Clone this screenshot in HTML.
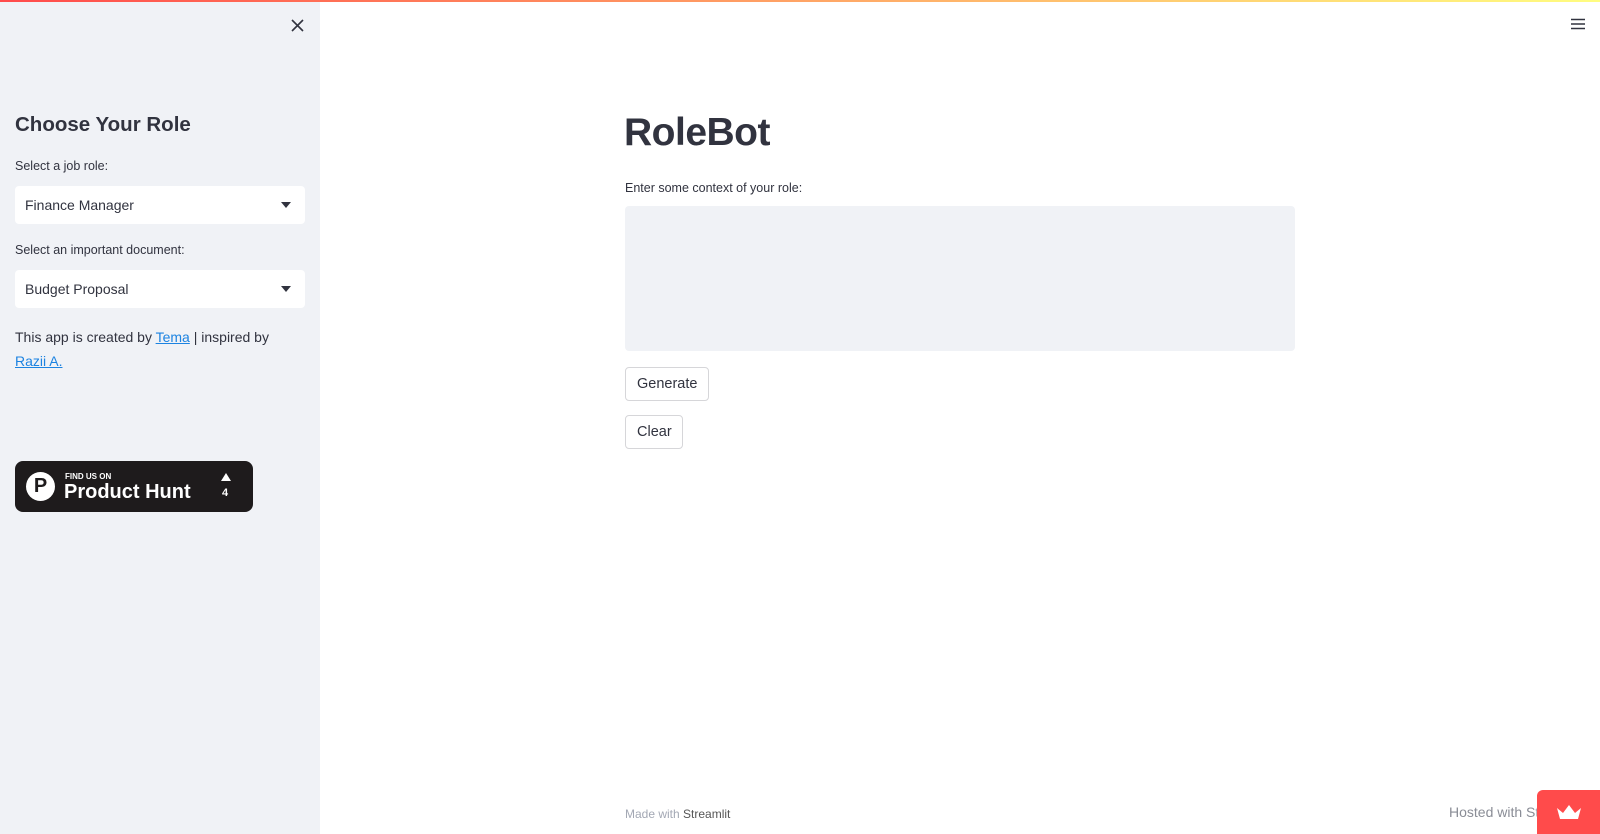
<!DOCTYPE html>
<html><head><meta charset="utf-8"><style>
*{box-sizing:border-box;margin:0;padding:0}
body{width:1600px;height:834px;overflow:hidden;font-family:"Liberation Sans",sans-serif;color:#31333F;background:#fff;position:relative}
.top{position:absolute;left:0;top:0;width:1600px;height:2px;background:linear-gradient(90deg,#ff4b4b,#fffd80);z-index:5}
.side{position:absolute;left:0;top:0;width:320px;height:834px;background:#f0f2f6}
.abs{position:absolute}
.sel{position:absolute;left:15px;width:290px;height:38px;background:#fff;border-radius:4px;font-size:14px;padding:11px 10px;}
.sel:after{content:"";position:absolute;right:14px;top:16px;border-left:5px solid transparent;border-right:5px solid transparent;border-top:6px solid #31333F}
.lbl{font-size:12.5px}
a{color:#1c83e1}
.btn{position:absolute;left:625px;height:34px;border:1px solid #d6d6d9;border-radius:4px;font-size:14.5px;padding:8px 11px;background:#fff}
</style></head><body>
<div class="top"></div>
<div class="side">
<svg class="abs" style="left:291px;top:19px" width="13" height="13" viewBox="0 0 13 13"><path d="M1 1L12 12M12 1L1 12" stroke="#31333F" stroke-width="1.6"/></svg>
<div class="abs" style="left:15px;top:113px;font-size:20.5px;font-weight:bold;color:#31333F">Choose Your Role</div>
<div class="abs lbl" style="left:15px;top:159px">Select a job role:</div>
<div class="sel" style="top:186px">Finance Manager</div>
<div class="abs lbl" style="left:15px;top:243px">Select an important document:</div>
<div class="sel" style="top:270px">Budget Proposal</div>
<div class="abs" style="left:15px;top:325px;font-size:14px;line-height:24px">This app is created by <a href="#">Tema</a> | inspired by<br><a href="#">Razii A.</a></div>
<div class="abs" style="left:15px;top:461px;width:238px;height:51px;background:#1e1b1c;border-radius:8px;color:#fff">
<div class="abs" style="left:11px;top:11px;width:29px;height:29px;border-radius:50%;background:#fff;color:#1e1b1c;font-weight:bold;font-size:20px;text-align:center;line-height:29px">P</div>
<div class="abs" style="left:50px;top:11px;font-size:8px;font-weight:bold">FIND US ON</div>
<div class="abs" style="left:49px;top:20px;font-size:20px;font-weight:bold">Product Hunt</div>
<div class="abs" style="left:206px;top:12px;border-left:5px solid transparent;border-right:5px solid transparent;border-bottom:8px solid #fff"></div>
<div class="abs" style="left:207px;top:26px;font-size:11px;font-weight:bold">4</div>
</div>
</div>
<svg class="abs" style="left:1570px;top:18px" width="16" height="12" viewBox="0 0 16 12"><path d="M1 1.5H15M1 6H15M1 10.5H15" stroke="#31333F" stroke-width="1.6"/></svg>
<div class="abs" style="left:624px;top:111px;font-size:39px;font-weight:bold;color:#31333F;letter-spacing:-0.5px">RoleBot</div>
<div class="abs lbl" style="left:625px;top:181px">Enter some context of your role:</div>
<div class="abs" style="left:625px;top:206px;width:670px;height:145px;background:#f0f2f6;border-radius:4px"></div>
<div class="btn" style="top:367px;width:84px">Generate</div>
<div class="btn" style="top:415px;width:58px">Clear</div>
<div class="abs" style="left:625px;top:807px;font-size:12px;color:#a3a8b4">Made with <span style="color:#555">Streamlit</span></div>
<div class="abs" style="left:1449px;top:804px;font-size:14px;color:#8a8d96">Hosted with St</div>
<div class="abs" style="left:1537px;top:790px;width:63px;height:44px;background:#ff4b4b;border-radius:6px 0 0 0">
<svg class="abs" style="left:19px;top:13px" width="26" height="18" viewBox="0 0 26 18"><path d="M1 5L7 10L13 2L19 10L25 5L22 16H4Z" fill="#fff"/></svg>
</div>
</body></html>
